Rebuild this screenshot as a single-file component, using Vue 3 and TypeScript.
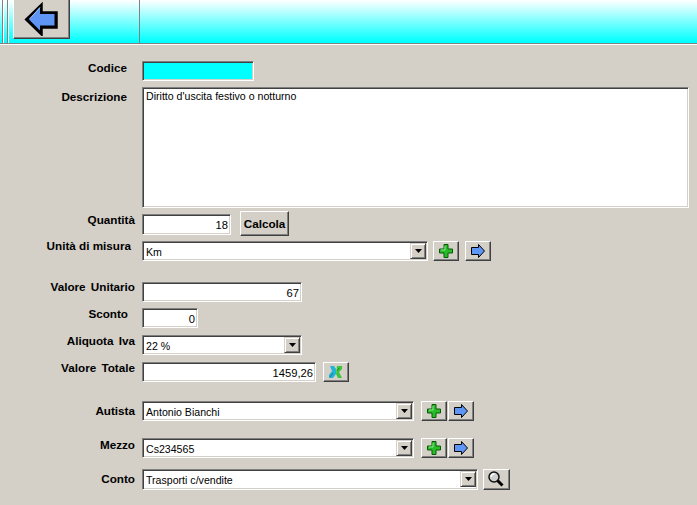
<script setup lang="ts">
const selectArrow = 'M0 0H7L3.5 4Z'
</script>

<template>
  <div class="page">
    <header class="toolbar">
      <i class="tick tick-a"></i>
      <i class="tick tick-b"></i>
      <button class="btn back" type="button" aria-label="Indietro">
        <svg width="36" height="36" viewBox="0 0 36 36">
          <path d="M20 3.500 3.500 19.500 20 35.500V28H35V12H20Z" fill="#000" stroke="#000" stroke-width="1.500"/>
          <path d="M18 7 7 19.500 18 30.500V25.500H32.500V14H18Z" fill="#5f95f4"/>
          <path d="M18 7.500 7.500 19" stroke="#a4c4f8" stroke-width="1" fill="none"/>
        </svg>
      </button>
      <i class="tick tick-c"></i>
    </header>

    <main class="form">
      <div class="row r-codice">
        <label>Codice</label>
        <div class="field w-codice cyan"></div>
      </div>

      <div class="row r-descr">
        <label>Descrizione</label>
        <div class="field memo">Diritto d'uscita festivo o notturno</div>
      </div>

      <div class="row r-quant">
        <label>Quantità</label>
        <div class="field w-quant num">18</div>
        <button class="btn calcola" type="button">Calcola</button>
      </div>

      <div class="row r-unita">
        <label>Unità di misura</label>
        <div class="field w-unita combo">
          <span>Km</span>
          <b class="drop"><svg width="7" height="4" viewBox="0 0 7 4"><path :d="selectArrow"/></svg></b>
        </div>
        <button class="btn small ml5" type="button" aria-label="Aggiungi">
          <svg width="14" height="14" viewBox="0 0 14 14"><path d="M5 .5H9V5H13.500V9H9V13.500H5V9H.5V5H5Z" fill="#2abb2a" stroke="#055a05"/><path d="M6 2V6H2" stroke="#90ec90" fill="none"/></svg>
        </button>
        <button class="btn small ml6" type="button" aria-label="Apri">
          <svg width="14" height="14" viewBox="0 0 14 14"><path d="M.5 3.500H7.500V.5L13.500 7 7.500 13.500V10.500H.5Z" fill="#5e96f5" stroke="#000"/></svg>
        </button>
      </div>

      <div class="row r-valore">
        <label>Valore Unitario</label>
        <div class="field w-valore num">67</div>
      </div>

      <div class="row r-sconto">
        <label>Sconto</label>
        <div class="field w-sconto num">0</div>
      </div>

      <div class="row r-aliquota">
        <label>Aliquota Iva</label>
        <div class="field w-valore combo">
          <span>22 %</span>
          <b class="drop"><svg width="7" height="4" viewBox="0 0 7 4"><path :d="selectArrow"/></svg></b>
        </div>
      </div>

      <div class="row r-totale">
        <label>Valore Totale</label>
        <div class="field w-totale num">1459,26</div>
        <button class="btn small ml7" type="button" aria-label="Ricalcola">
          <svg width="14" height="14" viewBox="0 0 14 14">
            <path d="M8 1 13 1 13 4 10 7 13 13 9 13 7 9Z" fill="#3cc43c"/>
            <path d="M10 3 8 6" stroke="#1f8f1f" fill="none"/>
            <path d="M1 1H5L7 4 7 9 4 13H0V10L3 6Z" fill="#22b4d4"/>
            <path d="M1 12 4 8" stroke="#157a9c" fill="none"/>
          </svg>
        </button>
      </div>

      <div class="row r-autista">
        <label>Autista</label>
        <div class="field w-autista combo">
          <span>Antonio Bianchi</span>
          <b class="drop"><svg width="7" height="4" viewBox="0 0 7 4"><path :d="selectArrow"/></svg></b>
        </div>
        <button class="btn small ml7" type="button" aria-label="Aggiungi">
          <svg width="14" height="14" viewBox="0 0 14 14"><path d="M5 .5H9V5H13.500V9H9V13.500H5V9H.5V5H5Z" fill="#2abb2a" stroke="#055a05"/><path d="M6 2V6H2" stroke="#90ec90" fill="none"/></svg>
        </button>
        <button class="btn small ml1" type="button" aria-label="Apri">
          <svg width="14" height="14" viewBox="0 0 14 14"><path d="M.5 3.500H7.500V.5L13.500 7 7.500 13.500V10.500H.5Z" fill="#5e96f5" stroke="#000"/></svg>
        </button>
      </div>

      <div class="row r-mezzo">
        <label>Mezzo</label>
        <div class="field w-autista combo">
          <span>Cs234565</span>
          <b class="drop"><svg width="7" height="4" viewBox="0 0 7 4"><path :d="selectArrow"/></svg></b>
        </div>
        <button class="btn small ml7" type="button" aria-label="Aggiungi">
          <svg width="14" height="14" viewBox="0 0 14 14"><path d="M5 .5H9V5H13.500V9H9V13.500H5V9H.5V5H5Z" fill="#2abb2a" stroke="#055a05"/><path d="M6 2V6H2" stroke="#90ec90" fill="none"/></svg>
        </button>
        <button class="btn small ml1" type="button" aria-label="Apri">
          <svg width="14" height="14" viewBox="0 0 14 14"><path d="M.5 3.500H7.500V.5L13.500 7 7.500 13.500V10.500H.5Z" fill="#5e96f5" stroke="#000"/></svg>
        </button>
      </div>

      <div class="row r-conto">
        <label>Conto</label>
        <div class="field w-conto combo">
          <span>Trasporti c/vendite</span>
          <b class="drop"><svg width="7" height="4" viewBox="0 0 7 4"><path :d="selectArrow"/></svg></b>
        </div>
        <button class="btn small ml5" type="button" aria-label="Cerca">
          <svg class="lens" width="16" height="16" viewBox="0 0 16 16">
            <path d="M9.500 9.500 14.500 14.500" stroke="#000" stroke-width="3"/>
            <circle cx="6" cy="6" r="5" fill="#cfcfcf" stroke="#111" stroke-width="1.500"/>
            <path d="M3 6C3 4 4.500 3 6.500 3" stroke="#fff" stroke-width="1.500" fill="none"/>
          </svg>
        </button>
      </div>
    </main>
  </div>
</template>

<style>
html, body { margin: 0; background: #d4d0c8; }
</style>

<style scoped>
.page {
  width: 697px;
  height: 505px;
  overflow: hidden;
  background: #d4d0c8;
  font-family: "Liberation Sans", Arial, sans-serif;
  font-size: 11px;
  color: #000;
}
.toolbar {
  position: relative;
  box-sizing: border-box;
  height: 45px;
  background: linear-gradient(#fff, #00ffff 42px);
  border-bottom: 1px solid #fff;
  box-shadow: inset 0 -1px 0 #808080;
}
.tick { position: absolute; top: 0; bottom: 1px; width: 1px; background: #808080; box-shadow: 1px 0 0 #fff; }
.tick-a { left: 2px; }
.tick-b { left: 7px; }
.tick-c { left: 139px; box-shadow: none; }
.btn {
  box-sizing: border-box;
  display: flex;
  align-items: center;
  justify-content: center;
  padding: 0;
  background: #d4d0c8;
  border: 1px solid;
  border-color: #fff #404040 #404040 #fff;
  box-shadow: inset -1px -1px 0 #808080;
  font-family: inherit;
  color: #000;
}
.back {
  position: absolute;
  left: 13px;
  top: -5px;
  width: 57px;
  height: 44px;
}
.back svg { margin: 2px 3px 0 0; }
.form { display: flex; flex-direction: column; }
.row { display: flex; align-items: flex-start; }
.row label {
  flex: none;
  box-sizing: border-box;
  width: 135px;
  margin-right: 7px;
  text-align: right;
  font-weight: 700;
  font-size: 11.7px;
  word-spacing: 2px;
  line-height: 14px;
}
.field {
  box-sizing: border-box;
  flex: none;
  height: 20px;
  background: #fff;
  border: 1px solid;
  border-color: #808080 #fff #fff #808080;
  box-shadow: inset 1px 1px 0 #404040, inset -1px -1px 0 #d4d0c8;
  font-size: 10.6px;
  line-height: 18px;
  padding: 0 3px;
  white-space: nowrap;
}
.num { text-align: right; padding-top: 1px; padding-right: 2px; font-size: 11.200px; }
.cyan { background: #00ffff; }
.memo { width: 547px; height: 121px; padding: 2px 3px; line-height: 13px; }
.combo { display: flex; justify-content: space-between; padding: 1px 1px 1px 3px; line-height: 18px; }
.drop {
  box-sizing: border-box;
  flex: none;
  width: 16px;
  height: 16px;
  display: flex;
  align-items: center;
  justify-content: center;
  background: #d4d0c8;
  border: 1px solid;
  border-color: #d4d0c8 #404040 #404040 #d4d0c8;
  box-shadow: inset 1px 1px 0 #fff, inset -1px -1px 0 #808080;
}
.drop svg { fill: #000; }
.small { flex: none; height: 20px; width: 26px; }
.lens { margin: -2px 0 0 -1px; }

.w-codice { width: 112px; }
.w-quant { width: 89px; height: 21px; }
.w-unita { width: 286px; }
.w-valore { width: 160px; }
.w-sconto { width: 56px; }
.w-totale { width: 174px; }
.w-autista { width: 272px; }
.w-conto { width: 336px; height: 21px; }

.r-codice { margin-top: 16px; }
.r-codice label { padding-right: 8px; margin-top: 0; }
.r-descr { margin-top: 6px; }
.r-descr label { padding-right: 8px; margin-top: 3px; }
.r-quant { margin-top: 6px; }
.r-quant label { margin-top: -1px; }
.r-unita { margin-top: 6px; }
.r-unita label { padding-right: 4px; margin-top: -2px; word-spacing: 0; }
.r-valore { margin-top: 21px; }
.r-valore label { margin-top: -2px; }
.r-sconto { margin-top: 6px; }
.r-sconto label { padding-right: 7px; margin-top: -1px; }
.r-aliquota { margin-top: 7px; }
.r-aliquota label { margin-top: -1px; }
.r-totale { margin-top: 7px; }
.r-totale label { margin-top: -1px; }
.r-autista { margin-top: 19px; }
.r-autista label { margin-top: 3px; }
.r-mezzo { margin-top: 17px; }
.r-conto { margin-top: 11px; }
.r-conto label { margin-top: 3px; }
.r-conto .small { height: 21px; width: 27px; }

.calcola {
  width: 49px;
  height: 25px;
  margin: -3px 0 -1px 9px;
  font-weight: 700;
  font-size: 11.7px;
}
.ml1 { margin-left: 1px; }
.ml5 { margin-left: 5px; }
.ml6 { margin-left: 6px; }
.ml7 { margin-left: 7px; }
</style>
